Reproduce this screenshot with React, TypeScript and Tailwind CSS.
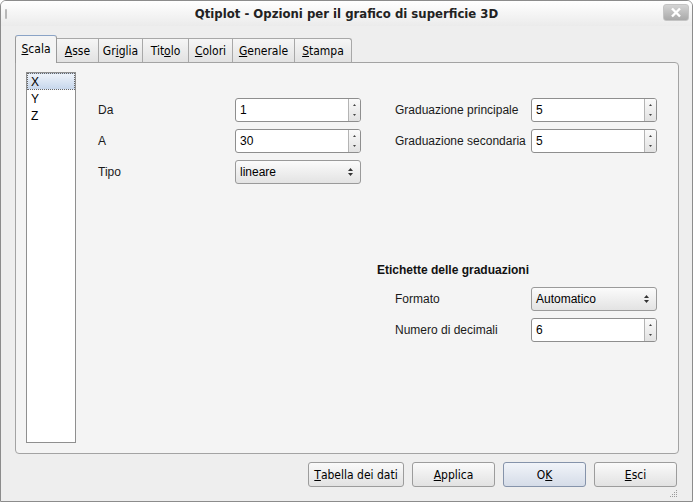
import React from "react";

const ui = { fontFamily: '"Liberation Sans", Arial, sans-serif' };
const narrow = { fontFamily: '"DejaVu Sans Condensed", "Liberation Sans Narrow", "Liberation Sans", sans-serif' };

const Arrows = ({ combo = false }: { combo?: boolean }) => (
  <svg width="7" height={combo ? 12 : 16} viewBox={combo ? "0 0 7 12" : "0 0 7 16"}>
    {combo ? (
      <>
        <path d="M1 5 L3.5 2 L6 5 Z" fill="#333" />
        <path d="M1 7 L3.5 10 L6 7 Z" fill="#333" />
      </>
    ) : (
      <>
        <path d="M2 4 L3.5 2 L5 4 Z" fill="#444" />
        <path d="M2 12 L3.5 14 L5 12 Z" fill="#444" />
      </>
    )}
  </svg>
);

const Spin = ({ value }: { value: string }) => (
  <div className="flex h-[24px] w-[126px] overflow-hidden rounded-[3px] border border-[#8e8e8e] bg-white">
    <div className="flex flex-1 items-center pl-[4px] text-[12px] text-black" style={ui}>
      {value}
    </div>
    <div className="flex w-[12px] items-center justify-center border-l border-[#b4b4b4] bg-gradient-to-b from-[#fafafa] to-[#e2e2e2]">
      <Arrows />
    </div>
  </div>
);

const Combo = ({ value }: { value: string }) => (
  <div className="flex h-[24px] w-[126px] items-center justify-between rounded-[3px] border border-[#9a9a9a] bg-gradient-to-b from-[#fbfbfb] to-[#e3e3e3] pl-[4px] pr-[6px] text-[12px] text-black" style={ui}>
    <span>{value}</span>
    <Arrows combo />
  </div>
);

const Label = ({ children }: { children: React.ReactNode }) => (
  <div className="flex h-[24px] items-center text-[12px] text-[#1a1a1a]" style={ui}>
    {children}
  </div>
);

const tabs: { pre: string; u: string; post: string }[] = [
  { pre: "", u: "S", post: "cala" },
  { pre: "", u: "A", post: "sse" },
  { pre: "Gr", u: "i", post: "glia" },
  { pre: "Tit", u: "o", post: "lo" },
  { pre: "", u: "C", post: "olori" },
  { pre: "", u: "G", post: "enerale" },
  { pre: "", u: "S", post: "tampa" },
];
const tabWidths = ["w-[42px]", "w-[42px]", "w-[44px]", "w-[46px]", "w-[44px]", "w-[62px]", "w-[57px]"];

const Btn = ({ pre, u, post, w, def }: { pre: string; u: string; post: string; w: string; def?: boolean }) => (
  <div
    className={`flex h-[25px] ${w} items-center justify-center rounded-[3px] border text-[12px] text-black ${
      def ? "border-[#8593aa] bg-gradient-to-b from-[#f1f4f9] to-[#d5dce8]" : "border-[#9c9c9c] bg-gradient-to-b from-[#fafafa] to-[#e2e2e2]"
    }`}
    style={narrow}
  >
    {pre}
    <span className="underline">{u}</span>
    {post}
  </div>
);

export default function App() {
  return (
    <div className="flex h-[502px] w-[693px] flex-col overflow-hidden rounded-t-[6px] border border-[#8c8c8c] bg-[#eeeeee]">
      <div className="grid h-[25px] grid-cols-[1fr_auto_1fr] items-center bg-gradient-to-b from-[#ffffff] to-[#ebebeb]">
        <div className="flex h-full items-center pl-[4px]">
          <div className="h-[10px] w-[2px] rounded-full bg-[#b8b8b8]" />
        </div>
        <div className="text-[13px] font-bold text-[#222]" style={narrow}>
          Qtiplot - Opzioni per il grafico di superficie 3D
        </div>
        <div className="flex h-full items-start justify-end pr-[3px] pt-[3px]">
          <div className="flex h-[17px] w-[26px] items-center justify-center rounded-[3px] border border-[#c4c4c4] bg-gradient-to-b from-[#d4d4d4] to-[#a9a9a9]">
            <svg width="12" height="11" viewBox="0 0 12 11">
              <path d="M2 1.5 L10 9.5 M10 1.5 L2 9.5" stroke="#fff" strokeWidth="2.4" />
            </svg>
          </div>
        </div>
      </div>

      <div className="flex flex-1 flex-col pl-[14px] pr-[13px]">
        <div className="mt-[9px] flex h-[27px] items-end">
          {tabs.map((t, i) => (
            <div
              key={i}
              className={`${tabWidths[i]} flex items-center justify-center text-[12px] text-black ${
                i === 0
                  ? "relative z-10 h-[28px] -mb-[1px] rounded-t-[3px] border border-b-0 border-[#9a9a9a] border-t-[#8aa3c6] bg-[#f4f4f4] pb-[2px]"
                  : "h-[24px] border border-l-0 border-b-0 border-[#a8a8a8] bg-gradient-to-b from-[#f6f6f6] to-[#e2e2e2]"
              } ${i === tabs.length - 1 ? "rounded-tr-[3px]" : ""}`}
              style={narrow}
            >
              {t.pre}
              <span className="underline">{t.u}</span>
              {t.post}
            </div>
          ))}
        </div>

        <div className="flex h-[392px] rounded-b-[4px] rounded-tr-[4px] border border-[#a3a3a3] bg-[#f4f4f4] pl-[10px] pt-[9px]">
          <div className="h-[371px] w-[50px] border border-[#8f8f8f] bg-white text-[12px] text-black" style={ui}>
            <div className="flex h-[17px] items-center border border-dotted border-[#666] bg-gradient-to-b from-[#eef3fa] to-[#c7d7ec] pl-[3px]">X</div>
            <div className="flex h-[17px] items-center pl-[4px]">Y</div>
            <div className="flex h-[17px] items-center pl-[4px]">Z</div>
          </div>

          <div className="ml-[22px] flex flex-col pt-[26px]">
            <div className="grid grid-cols-[137px_126px_34px_136px_126px] gap-y-[7px]">
              <Label>Da</Label>
              <Spin value="1" />
              <div />
              <Label>Graduazione principale</Label>
              <Spin value="5" />

              <Label>A</Label>
              <Spin value="30" />
              <div />
              <Label>Graduazione secondaria</Label>
              <Spin value="5" />

              <Label>Tipo</Label>
              <Combo value="lineare" />
            </div>

            <div className="ml-[279px] mt-[77px] flex flex-col">
              <div className="text-[12px] font-bold text-[#111]" style={ui}>
                Etichette delle graduazioni
              </div>
              <div className="mt-[8px] grid grid-cols-[136px_126px] gap-y-[7px] pl-[18px]">
                <Label>Formato</Label>
                <Combo value="Automatico" />
                <Label>Numero di decimali</Label>
                <Spin value="6" />
              </div>
            </div>
          </div>
        </div>

        <div className="mt-[8px] flex justify-end gap-[8px] pr-[2px]">
          <Btn pre="" u="T" post="abella dei dati" w="w-[96px]" />
          <Btn pre="" u="A" post="pplica" w="w-[83px]" />
          <Btn pre="O" u="K" post="" w="w-[83px]" def />
          <Btn pre="" u="E" post="sci" w="w-[83px]" />
        </div>
        <div className="flex justify-end pr-[1px] pt-[1px]">
          <svg width="10" height="10" viewBox="0 0 10 10">
            {[
              [8, 2], [6, 4], [8, 4], [4, 6], [6, 6], [8, 6], [2, 8], [4, 8], [6, 8], [8, 8],
            ].map(([x, y], i) => (
              <rect key={i} x={x} y={y} width="1" height="1" fill="#9a9a9a" />
            ))}
          </svg>
        </div>
      </div>
    </div>
  );
}
